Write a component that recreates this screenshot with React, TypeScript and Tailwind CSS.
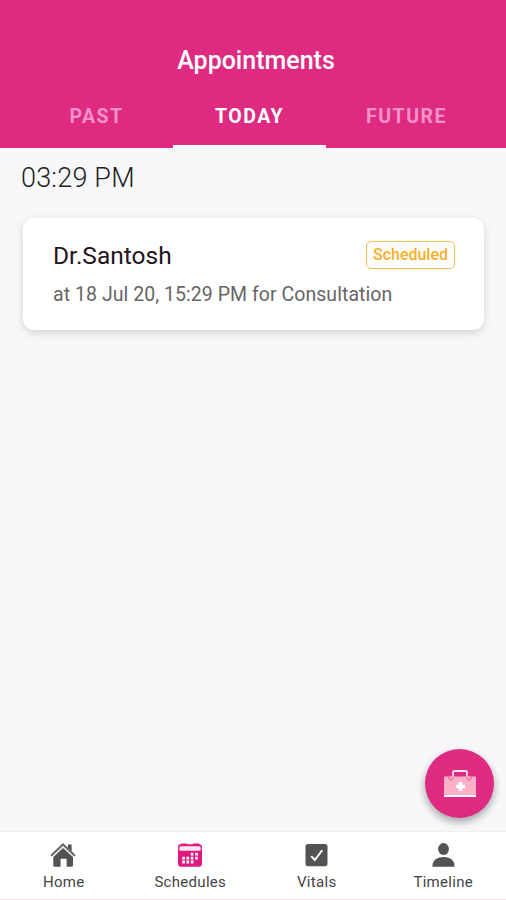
import clsx from "clsx";
import type { ReactNode } from "react";

const tabs = [
  { label: "PAST", width: "w-[153px]" },
  { label: "TODAY", width: "w-[153px]" },
  { label: "FUTURE", width: "w-[161px]" },
];

function HomeIcon() {
  return (
    <svg viewBox="0 0 26 26" className="size-[26px]" fill="#535353">
      <path d="M18 2.400h3.600v7L18 6z" />
      <path d="M13 6 23 15v8.200q0 1.500-1.500 1.500h-4.900v-8h-6v8H4.800q-1.500 0-1.500-1.500V15z" />
      <path d="M1.600 13.200 13 2.400l11.400 10.800" fill="none" stroke="#666" strokeWidth="2" strokeLinecap="round" />
      <path d="M2.600 14.500 13 4.700l10.400 9.800" fill="none" stroke="#ddd" strokeWidth=".9" />
    </svg>
  );
}

function CalendarIcon() {
  return (
    <svg viewBox="0 0 26 26" className="size-[26px]">
      <rect x="1" y="2.200" width="24" height="22.600" rx="3" fill="#e0187f" />
      <rect x="2.300" y="4.300" width="21.400" height="4.500" rx="1.500" fill="#fbe9f2" />
      <path d="M4.800 2.800h4.400M17 2.800h4.400" stroke="#e0187f" strokeWidth="2.600" strokeLinecap="round" />
      <g fill="#fff">
        <path d="M13.800 10.800h2.600v2.600h-2.600zM18.200 10.800h2.600v2.600h-2.600z" />
        <path d="M5.300 14.800h2.600v2.800H5.300zM9.500 14.800h2.600v2.800H9.500zM13.800 14.800h2.600v2.800h-2.600zM18.200 14.800h2.600v2.800h-2.600z" />
        <path d="M5.300 18.600h2.600v3H5.300zM9.500 18.600h2.600v3H9.500zM13.800 18.600h2.600v3h-2.600z" />
      </g>
    </svg>
  );
}

function CheckIcon() {
  return (
    <svg viewBox="0 0 26 26" className="size-[26px]">
      <rect x="2.500" y="2" width="22" height="22.200" rx="2.600" fill="#535353" />
      <path d="m8.200 14.200 3.600 3.800 7.400-9.800" fill="none" stroke="#fff" strokeWidth="1.900" />
    </svg>
  );
}

function PersonIcon() {
  return (
    <svg viewBox="0 0 26 26" className="size-[26px]" fill="#535353">
      <ellipse cx="13.500" cy="7" rx="5.400" ry="6" />
      <path d="M2.500 24.700v-1.600c0-4.700 5.100-8.200 11-8.200s11 3.500 11 8.200v1.600z" />
    </svg>
  );
}

function KitIcon() {
  return (
    <svg viewBox="0 0 34 28" className="h-7 w-[34px]">
      <rect x="1" y="6.500" width="32" height="20.500" fill="#ffb0c6" />
      <path d="M1 26h32" stroke="#fff" strokeWidth="2" />
      <path d="M10 8V2.700q0-1.700 1.700-1.700h10.600q1.700 0 1.700 1.700V8" fill="none" stroke="#ffe3ec" strokeWidth="1.800" />
      <path d="M6 6.500v2l2 2.200 2-2.200v-2M24 6.500v2l2 2.200 2-2.200v-2" fill="#ffb0c6" stroke="#e0459a" strokeWidth="1" />
      <path d="M17.500 12v9M13 16.500h9" stroke="#fff" strokeWidth="3.600" />
    </svg>
  );
}

const navItems: { label: string; icon: ReactNode }[] = [
  { label: "Home", icon: <HomeIcon /> },
  { label: "Schedules", icon: <CalendarIcon /> },
  { label: "Vitals", icon: <CheckIcon /> },
  { label: "Timeline", icon: <PersonIcon /> },
];

export default function App() {
  return (
    <div className="relative flex h-[900px] w-[506px] flex-col overflow-hidden bg-[#f8f8fb] font-['Roboto',sans-serif]">
      {/* Header */}
      <header className="flex h-[148px] shrink-0 flex-col bg-[#de2b81] pt-[46px]">
        <h1 className="pl-[6px] text-center text-[25px] leading-[30px] font-medium text-white">
          Appointments
        </h1>
        <div className="flex flex-1 pl-5">
          {tabs.map((tab) => (
            <button
              key={tab.label}
              className={clsx(
                "border-b-[3px] pt-[29px] pb-4 text-[19.500px] leading-6 font-bold tracking-[1.500px]",
                tab.width,
                tab.label === "TODAY" ? "border-white text-white" : "border-transparent text-[#f992c8]"
              )}
            >
              {tab.label}
            </button>
          ))}
        </div>
      </header>

      {/* Appointment list */}
      <main className="flex-1 pt-[14px]">
        <h2 className="pl-[21px] text-[27px] leading-8 font-light tracking-[0.2px] text-[#222]">03:29 PM</h2>
        <div className="mt-6 ml-[23px] h-[112px] w-[461px] rounded-[11px] bg-white pt-[23px] pr-[29px] pl-[30px] shadow-[0_3px_9px_rgba(0,0,0,0.15)]">
          <div className="flex items-start justify-between">
            <p className="text-[24.500px] leading-[30px] text-[#24141c]">Dr.Santosh</p>
            <span className="flex h-7 w-[89px] items-center justify-center rounded-[5px] border border-[#fbbd55] text-[16px] font-medium text-[#fbae24]">
              Scheduled
            </span>
          </div>
          <p className="mt-3 text-[19.500px] leading-6 tracking-[0.05px] text-[#666]">
            at 18 Jul 20, 15:29 PM for Consultation
          </p>
        </div>
      </main>

      <button
        aria-label="Medical kit"
        className="absolute top-[749px] left-[425px] flex size-[69px] items-center justify-center rounded-full bg-[#de2b81] shadow-[0_4px_9px_rgba(0,0,0,0.35)]"
      >
        <KitIcon />
      </button>

      {/* Bottom navigation */}
      <nav className="z-10 flex h-[69px] shrink-0 border-t border-b border-t-[#f0f0f2] border-b-[#f5dce4] bg-white">
        {navItems.map((item) => (
          <a key={item.label} className="flex flex-1 flex-col items-center pt-[10px]">
            {item.icon}
            <span className="mt-1 pl-px text-[15px] leading-5 tracking-[0.3px] text-[#444]">{item.label}</span>
          </a>
        ))}
      </nav>
    </div>
  );
}
